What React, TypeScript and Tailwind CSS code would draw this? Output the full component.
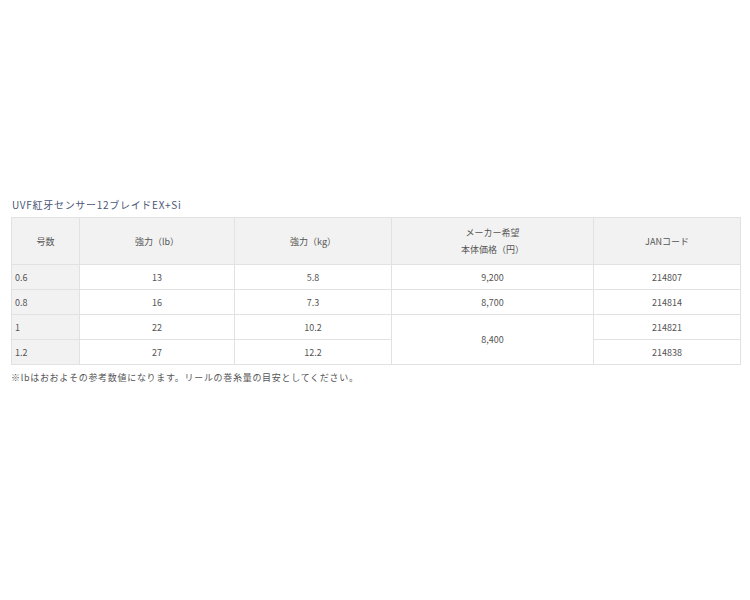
import React from "react";

const rows = [
  { no: "0.6", lb: "13", kg: "5.8", price: "9,200", jan: "214807" },
  { no: "0.8", lb: "16", kg: "7.3", price: "8,700", jan: "214814" },
  { no: "1", lb: "22", kg: "10.2", price: "8,400", jan: "214821", span: 2 },
  { no: "1.2", lb: "27", kg: "12.2", price: null, jan: "214838" },
];

export default function App() {
  return (
    <div
      className="w-[750px] h-[600px] bg-white text-[#555] text-[9px] leading-none"
      style={{ fontFamily: '"Noto Sans CJK JP", "Liberation Sans", sans-serif' }}
    >
      <div className="pt-[199px] pl-[11px] pr-[10px]">
        <div className="text-[#4a5677] text-[10px] tracking-[0.7px] h-[12px] flex items-center pl-[1px]">
          UVF紅牙センサー12ブレイドEX+Si
        </div>
        <table className="mt-[6px] w-[729px] border-collapse table-fixed border border-[#e2e2e2]">
          <colgroup>
            <col className="w-[68px]" />
            <col className="w-[155px]" />
            <col className="w-[157px]" />
            <col className="w-[202px]" />
            <col className="w-[147px]" />
          </colgroup>
          <thead>
            <tr className="h-[47px] bg-[#f2f2f2]">
              <th className="border border-[#e2e2e2] font-normal text-center">号数</th>
              <th className="border border-[#e2e2e2] font-normal text-center">強力（lb）</th>
              <th className="border border-[#e2e2e2] font-normal text-center">強力（kg）</th>
              <th className="border border-[#e2e2e2] font-normal text-center leading-[17px]">
                メーカー希望
                <br />
                本体価格（円）
              </th>
              <th className="border border-[#e2e2e2] font-normal text-center">JANコード</th>
            </tr>
          </thead>
          <tbody>
            {rows.map((r) => (
              <tr key={r.no} className="h-[25px]">
                <td className="border border-[#e2e2e2] bg-[#f2f2f2] pl-[3px] text-left">{r.no}</td>
                <td className="border border-[#e2e2e2] text-center">{r.lb}</td>
                <td className="border border-[#e2e2e2] text-center">{r.kg}</td>
                {r.price !== null && (
                  <td className="border border-[#e2e2e2] text-center" rowSpan={r.span ?? 1}>
                    {r.price}
                  </td>
                )}
                <td className="border border-[#e2e2e2] text-center">{r.jan}</td>
              </tr>
            ))}
          </tbody>
        </table>
        <div className="mt-[8px] text-[9px] tracking-[0.7px] text-[#555]">
          ※lbはおおよその参考数値になります。リールの巻糸量の目安としてください。
        </div>
      </div>
    </div>
  );
}
